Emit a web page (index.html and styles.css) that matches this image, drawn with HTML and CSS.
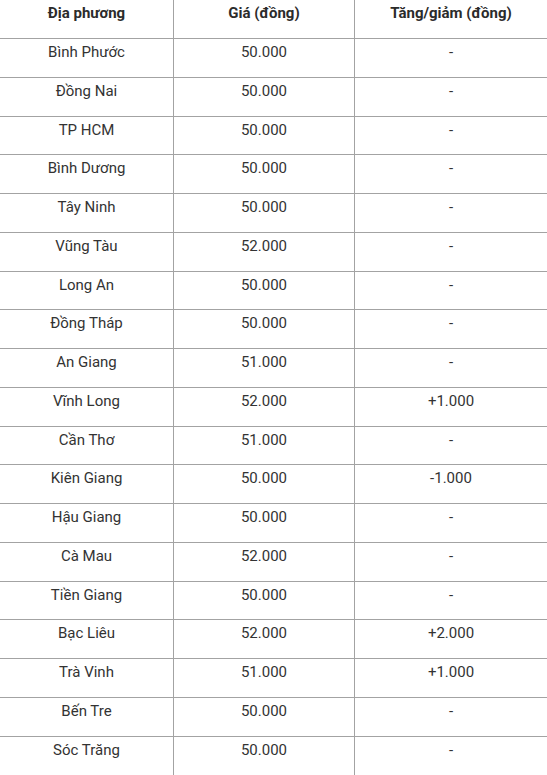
FILE: index.html
```html
<!DOCTYPE html>
<html lang="vi">
<head>
<meta charset="utf-8">
<title>Giá</title>
<link rel="stylesheet" href="styles.css">
</head>
<body>
<table class="price-table">
  <colgroup>
    <col class="col-place">
    <col class="col-price">
    <col class="col-change">
  </colgroup>
  <thead>
    <tr><th>Địa phương</th><th>Giá (đồng)</th><th>Tăng/giảm (đồng)</th></tr>
  </thead>
  <tbody>
    <tr><td>Bình Phước</td><td>50.000</td><td>-</td></tr>
    <tr><td>Đồng Nai</td><td>50.000</td><td>-</td></tr>
    <tr><td>TP HCM</td><td>50.000</td><td>-</td></tr>
    <tr><td>Bình Dương</td><td>50.000</td><td>-</td></tr>
    <tr><td>Tây Ninh</td><td>50.000</td><td>-</td></tr>
    <tr><td>Vũng Tàu</td><td>52.000</td><td>-</td></tr>
    <tr><td>Long An</td><td>50.000</td><td>-</td></tr>
    <tr><td>Đồng Tháp</td><td>50.000</td><td>-</td></tr>
    <tr><td>An Giang</td><td>51.000</td><td>-</td></tr>
    <tr><td>Vĩnh Long</td><td>52.000</td><td>+1.000</td></tr>
    <tr><td>Cần Thơ</td><td>51.000</td><td>-</td></tr>
    <tr><td>Kiên Giang</td><td>50.000</td><td>-1.000</td></tr>
    <tr><td>Hậu Giang</td><td>50.000</td><td>-</td></tr>
    <tr><td>Cà Mau</td><td>52.000</td><td>-</td></tr>
    <tr><td>Tiền Giang</td><td>50.000</td><td>-</td></tr>
    <tr><td>Bạc Liêu</td><td>52.000</td><td>+2.000</td></tr>
    <tr><td>Trà Vinh</td><td>51.000</td><td>+1.000</td></tr>
    <tr><td>Bến Tre</td><td>50.000</td><td>-</td></tr>
    <tr><td>Sóc Trăng</td><td>50.000</td><td>-</td></tr>
  </tbody>
</table>
</body>
</html>
```

FILE: styles.css
```css
html, body {
  margin: 0;
  padding: 0;
  background: #ffffff;
}

body {
  font-family: Roboto, "Liberation Sans", Arial, sans-serif;
  font-size: 15px;
  color: #333333;
}

.price-table {
  width: 547px;
  border-collapse: separate;
  border-spacing: 0;
  table-layout: fixed;
}

.col-place { width: 174px; }
.col-price { width: 181px; }
.col-change { width: 192px; }

.price-table th,
.price-table td {
  box-sizing: border-box;
  padding: 4px 6px 0;
  text-align: center;
  vertical-align: top;
  line-height: normal;
  border-bottom: 1px solid #a3a3a3;
  border-right: 1px solid #a3a3a3;
}

.price-table th:last-child,
.price-table td:last-child {
  border-right: none;
}

.price-table th {
  height: 39px;
  font-weight: 700;
  color: #2b2b2b;
}

.price-table td {
  height: 38.78px;
}

.price-table tbody tr:last-child td {
  border-bottom: none;
}
```
